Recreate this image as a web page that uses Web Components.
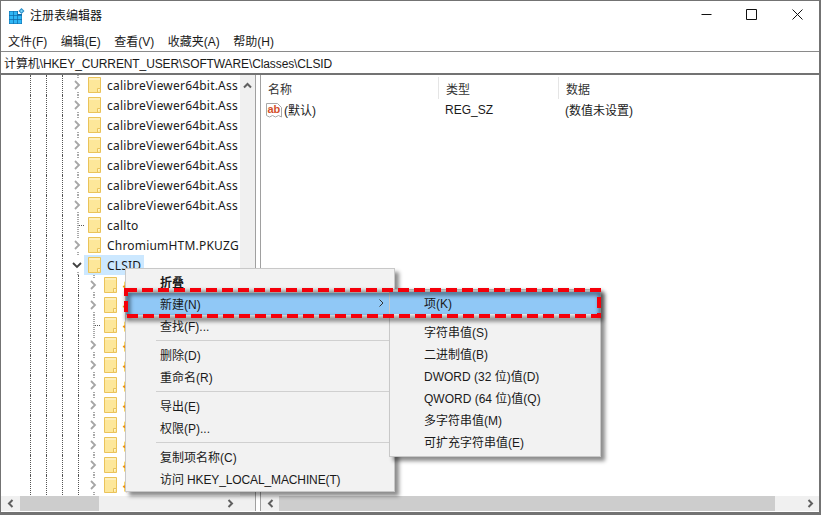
<!DOCTYPE html>
<html lang="zh">
<head>
<meta charset="utf-8">
<title>注册表编辑器</title>
<style>
  html, body { margin: 0; padding: 0; height: 100%; overflow: hidden; background: #fff; }
  body {
    font: 12px "Liberation Sans", "Noto Sans CJK SC", sans-serif;
    color: #1a1a1a;
  }
</style>
</head>
<body>
<reg-window>
  <reg-titlebar slot="title">注册表编辑器</reg-titlebar>
  <reg-menubar slot="menu"></reg-menubar>
  <reg-address slot="address">计算机\HKEY_CURRENT_USER\SOFTWARE\Classes\CLSID</reg-address>
  <reg-tree slot="tree"></reg-tree>
  <reg-values slot="values"></reg-values>
  <reg-menus slot="overlay"></reg-menus>
</reg-window>

<script>
const folderSvg = /* html */`<svg width="13" height="16" viewBox="0 0 13 16"><path d="M.5.500h12v15H.5z" fill="#fde79a" stroke="#eac35a"/><path d="M1 1h11v2H1z" fill="#fff0bd"/><path d="M9.500 15.500v-4h3" fill="#fff3c8" stroke="#eac35a"/></svg>`;
const arrowLeft = `<svg slot="start" width="7" height="9" viewBox="0 0 7 9"><path d="M5.500 1L2 4.500 5.500 8" fill="none" stroke="#606060" stroke-width="2"/></svg>`;
const arrowRight = `<svg slot="end" width="7" height="9" viewBox="0 0 7 9"><path d="M1.500 1L5 4.500 1.500 8" fill="none" stroke="#606060" stroke-width="2"/></svg>`;

class RegWindow extends HTMLElement {
  constructor() {
    super();
    this.attachShadow({ mode: 'open' }).innerHTML = /* html */`
      <style>
        :host {
          display: flex;
          flex-direction: column;
          position: relative;
          width: 821px;
          height: 515px;
          box-sizing: border-box;
          background: #fff;
          border: solid #737373;
          border-width: 1px 2px 3px 1px;
          overflow: hidden;
        }
        .panes {
          flex: 1;
          min-height: 0;
          display: grid;
          grid-template-columns: 255px 1fr;
          column-gap: 4px;
          padding-bottom: 1px;
          background: #fff;
        }
        .panes ::slotted(*) { min-width: 0; }
      </style>
      <slot name="title"></slot>
      <slot name="menu"></slot>
      <slot name="address"></slot>
      <div class="panes">
        <slot name="tree"></slot>
        <slot name="values"></slot>
      </div>
      <slot name="overlay"></slot>
    `;
  }
}

class RegTitlebar extends HTMLElement {
  constructor() {
    super();
    this.attachShadow({ mode: 'open' }).innerHTML = /* html */`
      <style>
        :host { display: flex; align-items: center; height: 29px; background: #fff; font-size: 12px; }
        .logo { margin: 0 0 0 8px; display: block; }
        .text { margin-left: 5px; flex: 1; color: #111; position: relative; top: -1px; }
        .btn { width: 45.5px; height: 29px; display: flex; align-items: center; justify-content: center; }
        .btn svg { position: relative; top: -1px; }
        .btn:last-child { margin-right: -1px; }
      </style>
      <svg class="logo" width="16" height="16" viewBox="0 0 16 16">
        <path d="M0 3h9v3h4v10H0z" fill="#0f6aa8"/>
        <path d="M.5 3.500h3.500V7H.5zM4.700 3.500h3.500V7H4.700zM.5 7.700h3.500v3.500H.5zM4.700 7.700h3.500v3.500H4.700zM8.900 7.700h3.600v3.500H8.900zM.5 11.900h3.500v3.600H.5zM4.700 11.900h3.500v3.600H4.700zM8.900 11.900h3.600v3.600H8.900z" fill="#2fb6f5"/>
        <path d="M12.500 0l3 3-3 3-3-3z" fill="#2a8fc9"/>
        <path d="M12.500 1.500l1.500 1.500-1.500 1.500L11 3z" fill="#7fd4f7"/>
      </svg>
      <span class="text"><slot></slot></span>
      <span class="btn"><svg width="11" height="11" viewBox="0 0 11 11"><path d="M.5 5.500h10" stroke="#111" fill="none"/></svg></span>
      <span class="btn"><svg width="11" height="11" viewBox="0 0 11 11"><path d="M.5.500h10v10H.5z" stroke="#111" fill="none"/></svg></span>
      <span class="btn"><svg width="11" height="11" viewBox="0 0 11 11"><path d="M.5.500l10 10M10.500.5l-10 10" stroke="#111" fill="none"/></svg></span>
    `;
  }
}

class RegMenubar extends HTMLElement {
  constructor() {
    super();
    this.attachShadow({ mode: 'open' });
    const items = ['文件(F)', '编辑(E)', '查看(V)', '收藏夹(A)', '帮助(H)'];
    this.shadowRoot.innerHTML = /* html */`
      <style>
        :host { display: flex; height: 21px; align-items: center; gap: 13.5px; padding-left: 7px; background: #fff; font-size: 12px; }
      </style>
      ${items.map(i => `<span>${i}</span>`).join('')}
    `;
  }
}

class RegAddress extends HTMLElement {
  constructor() {
    super();
    this.attachShadow({ mode: 'open' }).innerHTML = /* html */`
      <style>
        :host {
          display: flex;
          align-items: center;
          height: 21px;
          padding-left: 3px;
          background: #fff;
          border-top: 1px solid #8a8a8a;
          border-bottom: 2px solid #737373;
          font-size: 12px;
          letter-spacing: -.11px;
        }
      </style>
      <slot></slot>
    `;
  }
}

class RegScrollbar extends HTMLElement {
  static get observedAttributes() { return ['thumb']; }
  constructor() {
    super();
    this.attachShadow({ mode: 'open' }).innerHTML = /* html */`
      <style>
        :host { display: flex; height: 15px; background: #f0f0f0; align-items: stretch; flex: none; }
        :host([vertical]) { flex-direction: column; width: 15px; height: auto; }
        .arrow { flex: none; width: var(--arrow-size, 19px); display: flex; align-items: center; justify-content: center; }
        :host([vertical]) .arrow { width: auto; height: 20px; }
        .track { flex: 1; min-width: 0; display: flex; }
        .thumb { background: #cdcdcd; height: 100%; }
      </style>
      <span class="arrow"><slot name="start"></slot></span>
      <div class="track"><div class="thumb"></div></div>
      <span class="arrow"><slot name="end"></slot></span>
    `;
  }
  attributeChangedCallback(name, oldValue, newValue) {
    if (name === 'thumb') {
      const [offset, size] = newValue.split(' ');
      const thumb = this.shadowRoot.querySelector('.thumb');
      thumb.style.marginLeft = offset;
      thumb.style.width = size;
    }
  }
}

class TreeRow extends HTMLElement {
  constructor() {
    super();
    this.attachShadow({ mode: 'open' }).innerHTML = /* html */`
      <style>
        :host { display: flex; height: 20px; align-items: center; white-space: nowrap; }
        .guides { flex: none; height: 20px; position: relative; }
        .guide { position: absolute; top: 0; bottom: 0; width: 0; border-left: 1px dotted #555; }
        .exp { flex: none; width: 14px; height: 20px; }
        .sel { display: flex; align-items: center; height: 20px; padding-right: 3px; }
        :host([selected]) .sel { background: #cce8ff; }
        .icon { flex: none; width: 13px; height: 16px; margin-left: 4px; }
        .label {
          margin-left: 6px;
          font: 12px "Noto Sans", "Noto Sans CJK SC", sans-serif;
          letter-spacing: .2px;
          color: #1a1a1a;
        }
        .label ::slotted(b) { color: #e8850c; font-weight: bold; }
        svg { display: block; }
      </style>
      <div class="guides"></div>
      <div class="exp"></div>
      <div class="sel">
        <span class="icon">${folderSvg}</span>
        <span class="label"><slot></slot></span>
      </div>
    `;
  }
  connectedCallback() {
    const level = +this.getAttribute('level') || 0;
    const kind = this.getAttribute('kind') || 'closed';
    const guides = this.shadowRoot.querySelector('.guides');
    guides.style.width = `${69 + level * 16}px`;
    const xs = [29, 45, 61];
    if (level) xs.push(77);
    guides.innerHTML = xs.map(x => `<i class="guide" style="left:${x}px"></i>`).join('');
    const stubs = `<path d="M8 0v4M8 17v3" fill="none" stroke="#555" stroke-dasharray="1 1"/>`;
    const exp = this.shadowRoot.querySelector('.exp');
    if (kind === 'closed') {
      exp.innerHTML = `<svg width="14" height="20" viewBox="0 0 14 20">${stubs}<path d="M5 6l4 4-4 4" fill="none" stroke="#a6a6a6" stroke-width="1.800"/></svg>`;
    } else if (kind === 'open') {
      exp.innerHTML = `<svg width="14" height="20" viewBox="0 0 14 20"><path d="M8 17v3" fill="none" stroke="#555" stroke-dasharray="1 1"/><path d="M3 8l4 4 4-4" fill="none" stroke="#404040" stroke-width="1.800"/></svg>`;
    } else {
      exp.innerHTML = `<svg width="14" height="20" viewBox="0 0 14 20"><path d="M8 0v20M9 10.500h6" fill="none" stroke="#555" stroke-dasharray="1 1"/></svg>`;
    }
  }
}

class RegTree extends HTMLElement {
  constructor() {
    super();
    this.attachShadow({ mode: 'open' });
    const rows = [];
    for (let i = 0; i < 7; i++) rows.push('<tree-row>calibreViewer64bit.Ass</tree-row>');
    rows.push('<tree-row kind="leaf">callto</tree-row>');
    rows.push('<tree-row>ChromiumHTM.PKUZG</tree-row>');
    rows.push('<tree-row kind="open" selected>CLSID</tree-row>');
    const childKinds = ['closed', 'closed', 'leaf', 'closed', 'closed', 'closed', 'closed', 'closed', 'closed', 'closed', 'closed'];
    childKinds.forEach(k => rows.push(`<tree-row level="1" kind="${k}"><b>{</b></tree-row>`));
    this.shadowRoot.innerHTML = /* html */`
      <style>
        :host { display: flex; flex-direction: column; min-height: 0; height: 100%; box-sizing: border-box; border-right: 1px solid #a0a0a0; background: #fff; }
        .top { flex: 1; min-height: 0; display: flex; }
        .list { flex: 1; min-width: 0; overflow: hidden; }
        .corner { flex: none; display: flex; background: #f0f0f0; }
        reg-scrollbar:not([vertical]) { flex: 1; min-width: 0; }
        .filler { flex: none; width: 15px; }
      </style>
      <div class="top">
        <div class="list">${rows.join('')}</div>
        <reg-scrollbar vertical>
          <svg slot="start" width="9" height="7" viewBox="0 0 9 7"><path d="M1 5.500l3.500-3.500L8 5.500" fill="none" stroke="#606060" stroke-width="2"/></svg>
        </reg-scrollbar>
      </div>
      <div class="corner">
        <reg-scrollbar thumb="0 79px">${arrowLeft}${arrowRight}</reg-scrollbar>
        <div class="filler"></div>
      </div>
    `;
  }
}

class RegValues extends HTMLElement {
  constructor() {
    super();
    this.attachShadow({ mode: 'open' }).innerHTML = /* html */`
      <style>
        :host { display: flex; flex-direction: column; height: 100%; min-height: 0; border-left: 1px solid #a0a0a0; box-sizing: border-box; background: #fff; }
        .head { display: grid; grid-template-columns: 178px 120px 1fr; height: 25px; flex: none; }
        .head span { box-sizing: border-box; padding: 3px 0 0 7px; border-right: 1px solid #e5e5e5; height: 22px; margin-top: 2px; color: #333; }
        .head span:last-child { border: 0; }
        .rows { flex: 1; min-height: 0; }
        .row { display: grid; grid-template-columns: 177px 120px 1fr; height: 20px; align-items: center; }
        .name { display: flex; align-items: center; padding-left: 5px; gap: 2px; }
        .name span, .cell { position: relative; top: -.5px; }
        .cell { padding-left: 7px; }
        reg-scrollbar { --arrow-size: 18px; }
        svg { display: block; }
      </style>
      <div class="head"><span>名称</span><span>类型</span><span>数据</span></div>
      <div class="rows">
        <div class="row">
          <span class="name">
            <svg width="16" height="16" viewBox="0 0 16 16">
              <path d="M.5 1.500h11l4 4v9.500l-3-1.500-3 1.500-3-1.500-3 1.500-3-1.500z" fill="#fff" stroke="#a8a8a8"/>
              <text x="1.500" y="10.500" font-family="Liberation Sans" font-size="11" font-weight="bold" fill="#d3502b">ab</text>
            </svg>
            <span>(默认)</span>
          </span>
          <span class="cell">REG_SZ</span>
          <span class="cell">(数值未设置)</span>
        </div>
      </div>
      <reg-scrollbar thumb="0 496px">${arrowLeft}${arrowRight}</reg-scrollbar>
    `;
  }
}

class PopupMenu extends HTMLElement {
  constructor() {
    super();
    this.attachShadow({ mode: 'open' }).innerHTML = /* html */`
      <style>
        :host {
          display: block;
          position: absolute;
          box-sizing: border-box;
          background: #f2f2f2;
          border: 1px solid #c8c8c8;
          box-shadow: 4px 4px 4px rgba(0,0,0,.45);
        }
      </style>
      <slot></slot>
    `;
  }
}

class MenuItem extends HTMLElement {
  constructor() {
    super();
    this.attachShadow({ mode: 'open' }).innerHTML = /* html */`
      <style>
        :host { display: flex; align-items: center; box-sizing: border-box; height: 22px; padding: 0 0 2px 34px; font-size: 12px; color: #1a1a1a; position: relative; white-space: nowrap; }
        :host([strong]) { font-weight: bold; }
        :host([active]) { background: #90c8f6; }
        .arrow { position: absolute; right: 10px; top: 50%; margin-top: -5px; display: none; }
        :host([submenu]) .arrow { display: block; }
      </style>
      <slot></slot>
      <svg class="arrow" width="5" height="8" viewBox="0 0 5 8"><path d="M.5.500L4 4 .5 7.500" fill="none" stroke="#333"/></svg>
    `;
  }
}

class MenuSeparator extends HTMLElement {
  constructor() {
    super();
    this.attachShadow({ mode: 'open' }).innerHTML = /* html */`
      <style>:host { display: block; height: 1px; margin: 3px 0 3px 30px; background: #d0d0d0; }</style>
    `;
  }
}

class RegMenus extends HTMLElement {
  constructor() {
    super();
    this.attachShadow({ mode: 'open' }).innerHTML = /* html */`
      <style>
        :host { display: block; position: absolute; inset: 0; pointer-events: none; }
        .main { left: 124px; top: 267px; width: 270px; height: 224px; padding-top: 2px; }
        .sub { left: 388px; top: 288px; width: 212px; height: 168px; padding-top: 2px; }
        .callout { position: absolute; left: 123px; top: 287px; width: 477px; height: 30px; overflow: visible; }
        .gap { height: 7px; }
      </style>
      <popup-menu class="main">
        <menu-item strong>折叠</menu-item>
        <menu-item active submenu>新建(N)</menu-item>
        <menu-item>查找(F)...</menu-item>
        <menu-separator></menu-separator>
        <menu-item>删除(D)</menu-item>
        <menu-item>重命名(R)</menu-item>
        <menu-separator></menu-separator>
        <menu-item>导出(E)</menu-item>
        <menu-item>权限(P)...</menu-item>
        <menu-separator></menu-separator>
        <menu-item>复制项名称(C)</menu-item>
        <menu-item style="letter-spacing:-.12px">访问 HKEY_LOCAL_MACHINE(T)</menu-item>
      </popup-menu>
      <popup-menu class="sub">
        <menu-item active>项(K)</menu-item>
        <div class="gap"></div>
        <menu-item>字符串值(S)</menu-item>
        <menu-item>二进制值(B)</menu-item>
        <menu-item>DWORD (32 位)值(D)</menu-item>
        <menu-item>QWORD (64 位)值(Q)</menu-item>
        <menu-item>多字符串值(M)</menu-item>
        <menu-item>可扩充字符串值(E)</menu-item>
      </popup-menu>
      <svg class="callout" viewBox="0 0 477 30">
        <path d="M2 2h473v26H2z" fill="none" stroke="#000" stroke-opacity=".55" stroke-width="4" transform="translate(2 3)" style="filter:blur(2px)"/>
        <path d="M2 2h473v26H2z" fill="none" stroke="#f5000a" stroke-width="4" stroke-dasharray="11 5"/>
      </svg>
    `;
  }
}

customElements.define('reg-window', RegWindow);
customElements.define('reg-titlebar', RegTitlebar);
customElements.define('reg-menubar', RegMenubar);
customElements.define('reg-address', RegAddress);
customElements.define('reg-scrollbar', RegScrollbar);
customElements.define('tree-row', TreeRow);
customElements.define('reg-tree', RegTree);
customElements.define('reg-values', RegValues);
customElements.define('popup-menu', PopupMenu);
customElements.define('menu-item', MenuItem);
customElements.define('menu-separator', MenuSeparator);
customElements.define('reg-menus', RegMenus);
</script>
</body>
</html>
